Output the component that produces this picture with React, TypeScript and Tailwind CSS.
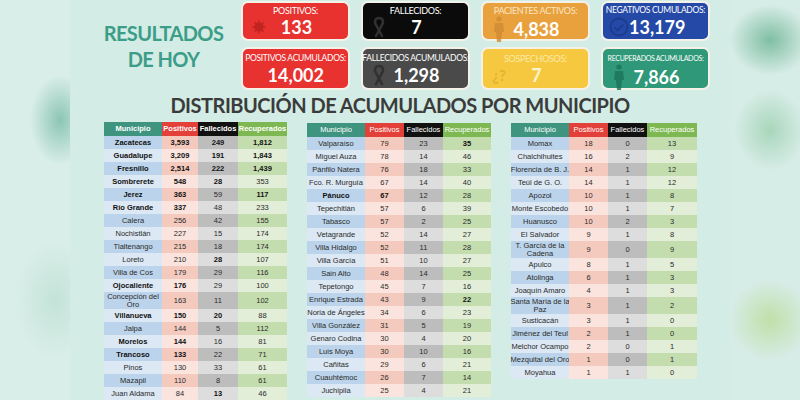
import React from "react";

type Row = [string, string, string, string, string];

const T1: Row[] = [
  ["Zacatecas", "3,593", "249", "1,812", "1111"],
  ["Guadalupe", "3,209", "191", "1,843", "1111"],
  ["Fresnillo", "2,514", "222", "1,439", "1111"],
  ["Sombrerete", "548", "28", "353", "1110"],
  ["Jerez", "363", "59", "117", "1101"],
  ["Río Grande", "337", "48", "233", "1100"],
  ["Calera", "256", "42", "155", "0000"],
  ["Nochistlán", "227", "15", "174", "0000"],
  ["Tlaltenango", "215", "18", "174", "0000"],
  ["Loreto", "210", "28", "107", "0010"],
  ["Villa de Cos", "179", "29", "116", "0000"],
  ["Ojocaliente", "176", "29", "100", "1100"],
  ["Concepción del\nOro", "163", "11", "102", "0000"],
  ["Villanueva", "150", "20", "88", "1110"],
  ["Jalpa", "144", "5", "112", "0000"],
  ["Morelos", "144", "16", "81", "1100"],
  ["Trancoso", "133", "22", "71", "1100"],
  ["Pinos", "130", "33", "61", "0000"],
  ["Mazapil", "110", "8", "61", "0000"],
  ["Juan Aldama", "84", "13", "46", "0010"],
];

const T2: Row[] = [
  ["Valparaíso", "79", "23", "35", "0001"],
  ["Miguel Auza", "78", "14", "46", "0000"],
  ["Pánfilo Natera", "76", "18", "33", "0000"],
  ["Fco. R. Murguía", "67", "14", "40", "0000"],
  ["Pánuco", "67", "12", "28", "1100"],
  ["Tepechitlán", "57", "6", "39", "0000"],
  ["Tabasco", "57", "2", "25", "0000"],
  ["Vetagrande", "52", "14", "27", "0000"],
  ["Villa Hidalgo", "52", "11", "28", "0000"],
  ["Villa García", "51", "10", "27", "0000"],
  ["Sain Alto", "48", "14", "25", "0000"],
  ["Tepetongo", "45", "7", "16", "0000"],
  ["Enrique Estrada", "43", "9", "22", "0001"],
  ["Noria de Ángeles", "34", "6", "23", "0000"],
  ["Villa González", "31", "5", "19", "0000"],
  ["Genaro Codina", "30", "4", "20", "0000"],
  ["Luis Moya", "30", "10", "16", "0000"],
  ["Cañitas", "29", "6", "21", "0000"],
  ["Cuauhtémoc", "26", "7", "14", "0000"],
  ["Juchipila", "25", "4", "21", "0000"],
];

const T3: Row[] = [
  ["Momax", "18", "0", "13", "0000"],
  ["Chalchihuites", "16", "2", "9", "0000"],
  ["Florencia de B. J.", "14", "1", "12", "0000"],
  ["Teúl de G. O.", "14", "1", "12", "0000"],
  ["Apozol", "10", "1", "8", "0000"],
  ["Monte Escobedo", "10", "1", "7", "0000"],
  ["Huanusco", "10", "2", "3", "0000"],
  ["El Salvador", "9", "1", "8", "0000"],
  ["T. García de la\nCadena", "9", "0", "9", "0000"],
  ["Apulco", "8", "1", "5", "0000"],
  ["Atolinga", "6", "1", "3", "0000"],
  ["Joaquín Amaro", "4", "1", "3", "0000"],
  ["Santa María de la\nPaz", "3", "1", "2", "0000"],
  ["Susticacán", "3", "1", "0", "0000"],
  ["Jiménez del Teul", "2", "1", "0", "0000"],
  ["Melchor Ocampo", "2", "0", "1", "0000"],
  ["Mezquital del Oro", "1", "0", "1", "0000"],
  ["Moyahua", "1", "1", "0", "0000"],
];

const DARK = ["bg-[#bcd4eb]", "bg-[#f5cabe]", "bg-[#bdbdbd]", "bg-[#c4ddae]"];
const LIGHT = ["bg-[#dce8f4]", "bg-[#fae4dd]", "bg-[#dddddd]", "bg-[#e2eed8]"];

function MuniTable({ rows, cols, boldHeader }: { rows: Row[]; cols: string; boldHeader?: boolean }) {
  const head = boldHeader ? "font-bold" : "font-normal";
  return (
    <div className={`grid ${cols} text-[7.5px] leading-[8px] text-[#2a2a2a] [font-family:'Liberation_Sans',Arial,sans-serif]`}>
      <div className={`h-[14px] flex items-center justify-center bg-[#3f9480] text-white ${head}`}>Municipio</div>
      <div className={`h-[14px] flex items-center justify-center bg-[#e3403a] text-white ${head}`}>Positivos</div>
      <div className={`h-[14px] flex items-center justify-center bg-[#111111] text-white ${head}`}>Fallecidos</div>
      <div className={`h-[14px] flex items-center justify-center bg-[#7db852] text-white whitespace-nowrap ${head}`}>Recuperados</div>
      {rows.map((r, i) => {
        const tall = r[0].includes("\n");
        const bg = i % 2 === 0 ? DARK : LIGHT;
        return [0, 1, 2, 3].map((c) => (
          <div
            key={`${i}-${c}`}
            className={`${tall ? "h-[17px] whitespace-pre" : "h-[13px] whitespace-nowrap"} flex items-center justify-center text-center ${bg[c]} ${r[4][c] === "1" ? "font-bold text-[#111]" : ""}`}
          >
            {r[c]}
          </div>
        ));
      })}
    </div>
  );
}

function Virus({ color }: { color: string }) {
  return (
    <svg width="16" height="16" viewBox="0 0 24 24" fill="none" stroke={color} strokeWidth="2">
      <circle cx="12" cy="12" r="6" fill={color} />
      <path d="M12 2v4M12 18v4M2 12h4M18 12h4M5 5l3 3M16 16l3 3M19 5l-3 3M8 16l-3 3" />
    </svg>
  );
}

function Ribbon({ color }: { color: string }) {
  return (
    <svg width="14" height="22" viewBox="0 0 14 22" fill="none" stroke={color} strokeWidth="2.6" strokeLinecap="round">
      <path d="M4 20 L10 9 C12 6 11 2 7 2 C3 2 2 6 4 9 L10 20" />
    </svg>
  );
}

function Person({ color }: { color: string }) {
  return (
    <svg width="12" height="26" viewBox="0 0 12 26" fill={color}>
      <circle cx="6" cy="3" r="2.6" />
      <path d="M2 7h8l1 9h-2l-1 10H4L3 16H1z" />
    </svg>
  );
}

function CheckCircle({ color }: { color: string }) {
  return (
    <svg width="20" height="20" viewBox="0 0 20 20" fill="none" stroke={color} strokeWidth="1.8">
      <circle cx="10" cy="10" r="8.5" />
      <path d="M5.5 10.5l3 3 6-6" />
    </svg>
  );
}

function Card({
  label,
  value,
  bg,
  labelColor = "text-white",
  valueColor = "text-white",
  labelSize = "text-[9px]",
  icon,
  tall,
}: {
  label: string;
  value: string;
  bg: string;
  labelColor?: string;
  valueColor?: string;
  labelSize?: string;
  icon?: React.ReactNode;
  tall?: boolean;
}) {
  return (
    <div className={`${tall ? "h-[43px] pt-[4px]" : "h-[40px] pt-[2px]"} rounded-[7px] border-2 border-[#f4f1e8] ${bg} flex flex-col items-center [font-family:Lato,'Open_Sans',sans-serif]`}>
      <div className={`${labelSize} ${labelColor} leading-[11px] whitespace-nowrap tracking-[-0.3px]`}>{label}</div>
      <div className="flex items-center w-full px-[6px]">
        <div className="w-[20px] flex justify-center opacity-80">{icon}</div>
        <div className={`flex-1 text-center pr-[18px] text-[18px] leading-[22px] font-bold ${valueColor}`}>{value}</div>
      </div>
    </div>
  );
}

export default function App() {
  return (
    <div className="w-[800px] h-[400px] flex overflow-hidden bg-[#d5ebe5]">
      <div className="w-[70px] h-full bg-[#d9eee9] bg-[radial-gradient(ellipse_30px_45px_at_60px_120px,#8cc5b4_0%,transparent_100%),radial-gradient(ellipse_40px_60px_at_55px_300px,#c4e3d8_0%,transparent_100%)]" />
      <div className="w-[660px] h-full bg-[#d3ece5] flex flex-col">
        <div className="flex pt-[1px]">
          <div className="w-[171px] pl-[16px] flex flex-col items-center justify-center text-[#3c9d88] font-bold text-[20px] leading-[26px] tracking-[-0.6px] [font-family:Lato,'Open_Sans',sans-serif]">
            <div>RESULTADOS</div>
            <div>DE HOY</div>
          </div>
          <div className="grid grid-cols-[109px_109px_109px_109px] gap-x-[11px] gap-y-[6px]">
            <Card label="POSITIVOS:" value="133" bg="bg-[#e8322f]" icon={<Virus color="#b8221f" />} />
            <Card label="FALLECIDOS:" value="7" bg="bg-[#0b0b0b]" icon={<Ribbon color="#3a3a3a" />} />
            <Card label="PACIENTES ACTIVOS:" value="4,838" bg="bg-[#e8a13d]" labelColor="text-[#fbe6c4]" icon={<Person color="#cf8a35" />} />
            <Card label="NEGATIVOS CUMULADOS:" value="13,179" bg="bg-[#2549a6]" labelSize="text-[8.5px]" icon={<CheckCircle color="#1b3a8c" />} />
            <Card tall label="POSITIVOS ACUMULADOS:" value="14,002" bg="bg-[#e8322f]" labelSize="text-[8.5px]" />
            <Card tall label="FALLECIDOS ACUMULADOS:" value="1,298" bg="bg-[#4a4a4a]" labelSize="text-[8.5px]" icon={<Ribbon color="#2c2c2c" />} />
            <Card
              tall
              label="SOSPECHOSOS:"
              value="7"
              bg="bg-[#f6c83f]"
              labelColor="text-[#fbe9a8]"
              valueColor="text-[#fdf3cf]"
              icon={<span className="text-[15px] font-bold text-[#e3ad2c] leading-none">¿?</span>}
            />
            <Card tall label="RECUPERADOS ACUMULADOS:" value="7,866" bg="bg-[#2e9878]" labelSize="text-[7px]" icon={<Person color="#1c7359" />} />
          </div>
        </div>
        <div className="mt-[3px] text-center text-[#3b3b3b] font-bold text-[20px] leading-[24px] tracking-[-0.5px] [font-family:Lato,'Open_Sans',sans-serif]">
          DISTRIBUCIÓN DE ACUMULADOS POR MUNICIPIO
        </div>
        <div className="flex items-start gap-[20px] pl-[34px] mt-[5px]">
          <div className="w-[183px]">
            <MuniTable rows={T1} cols="grid-cols-[58px_36px_40px_49px]" boldHeader />
          </div>
          <div className="w-[184px] mt-[1px]">
            <MuniTable rows={T2} cols="grid-cols-[58px_39px_39px_48px]" />
          </div>
          <div className="w-[186px] mt-[1px]">
            <MuniTable rows={T3} cols="grid-cols-[58px_39px_39px_50px]" />
          </div>
        </div>
      </div>
      <div className="w-[70px] h-full bg-[#d6ece6] bg-[radial-gradient(ellipse_40px_35px_at_40px_40px,#7fbea3_0%,transparent_100%),radial-gradient(ellipse_35px_40px_at_40px_130px,#a9d6bb_0%,transparent_100%),radial-gradient(ellipse_40px_40px_at_40px_320px,#bfe0a8_0%,transparent_100%)]" />
    </div>
  );
}
